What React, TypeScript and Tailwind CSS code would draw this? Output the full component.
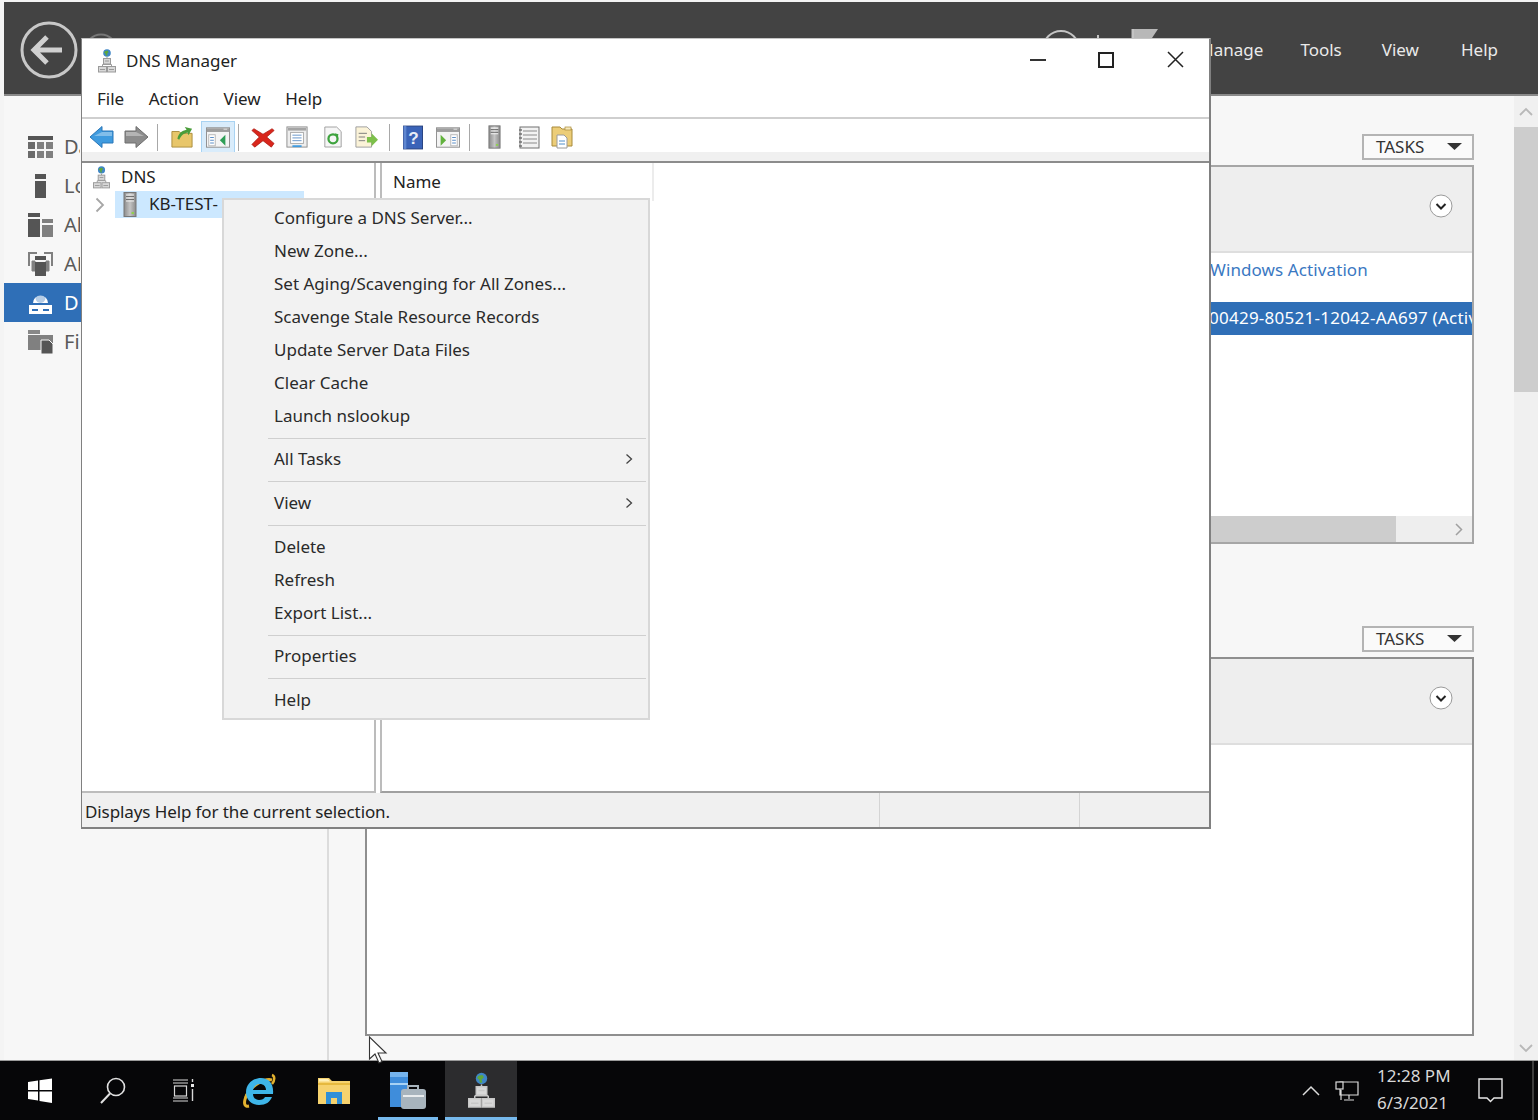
import React from "react";

function Dns({ w = 18, h = 24, c = "#9a9a9a" }: { w?: number; h?: number; c?: string }) {
  return (
    <svg width={w} height={h} viewBox="0 0 18 24" className="shrink-0">
      <circle cx="9" cy="4" r="3.800" fill="#3f86c6" />
      <path d="M7 2.200l2.600-.6 1 1.600-1.600 1.600 .6 1.800-1.600.2-.6-2.200L6 3.600z" fill="#5fa83a" />
      <path d="M9 8v2" stroke={c} strokeWidth="1" />
      <rect x="5.500" y="9.500" width="7" height="5.500" fill="#d8d8d8" stroke={c} />
      <path d="M4.500 15.500v2M13.500 15.500v2M4.500 15.500h9" stroke={c} fill="none" />
      <rect x="0.500" y="17.500" width="8" height="5.500" fill="#d8d8d8" stroke={c} />
      <rect x="9.500" y="17.500" width="8" height="5.500" fill="#d8d8d8" stroke={c} />
      <path d="M2 20.500h5M11 20.500h5M7 12h4" stroke={c} />
    </svg>
  );
}

function ServerIco({ w = 14, h = 25 }: { w?: number; h?: number }) {
  return (
    <svg width={w} height={h} viewBox="0 0 14 25" className="shrink-0">
      <defs>
        <linearGradient id="srv" x1="0" x2="1" y1="0" y2="0">
          <stop offset="0" stopColor="#8c8c8c" />
          <stop offset="0.5" stopColor="#c4c4c4" />
          <stop offset="1" stopColor="#8a8a8a" />
        </linearGradient>
      </defs>
      <rect x="1" y="0.500" width="12" height="24" fill="url(#srv)" stroke="#777" />
      <path d="M3 3h8M3 6h8M3 9h8" stroke="#f2f2f2" strokeWidth="1.200" />
      <path d="M3 4.500h8M3 7.500h8" stroke="#5f5f5f" strokeWidth="0.800" />
      <rect x="8.500" y="20" width="2.500" height="2" fill="#8fd04f" />
    </svg>
  );
}

function Arrow({ color, edge, flip }: { color: string; edge: string; flip?: boolean }) {
  return (
    <svg width="25" height="24" viewBox="0 0 25 24" className={flip ? "-scale-x-100" : ""}>
      <path d="M1 12 L13 1.500 V6 H24 V18 H13 V22.500Z" fill={color} stroke={edge} strokeWidth="1" strokeLinejoin="round" />
      <path d="M13 7 H23 V11 H5z" fill="#ffffff" fillOpacity="0.35" />
    </svg>
  );
}

function WinPane({ left }: { left: boolean }) {
  return (
    <svg width="24" height="21" viewBox="0 0 26 22">
      <rect x="0.500" y="0.500" width="25" height="21" fill="#f4f4f4" stroke="#8b8b8b" />
      <rect x="1" y="1" width="24" height="4" fill="#9d9d9d" />
      <path d="M19 2h4" stroke="#e8e8e8" strokeWidth="1" />
      {left ? (
        <>
          <rect x="3" y="8" width="7" height="12" fill="#fff" stroke="#b5b5b5" />
          <path d="M4.500 11h4M4.500 14h4M4.500 17h4" stroke="#5d8fc7" strokeWidth="1.200" />
          <path d="M21 8 L15 14 L21 20z" fill="#2f9e57" />
        </>
      ) : (
        <>
          <path d="M5 8 L11 14 L5 20z" fill="#62b23d" />
          <rect x="16" y="8" width="7" height="12" fill="#fff" stroke="#b5b5b5" />
          <path d="M17.500 11h4M17.500 14h4M17.500 17h4" stroke="#5d8fc7" strokeWidth="1.200" />
        </>
      )}
    </svg>
  );
}

function ToolSep() {
  return <div className="w-[1px] h-[27px] bg-[#a8a8a8] shrink-0" />;
}

function MenuRow({ label, arrow }: { label: string; arrow?: boolean }) {
  return (
    <div className="h-[33px] flex items-center pl-[50px] pr-[15px] justify-between">
      <span>{label}</span>
      {arrow && (
        <svg width="8" height="12" viewBox="0 0 8 12">
          <path d="M1.500 1.500 L6.500 6 L1.500 10.500" fill="none" stroke="#444" strokeWidth="1.300" />
        </svg>
      )}
    </div>
  );
}

function MenuSep() {
  return (
    <div className="h-[10.6px] flex items-center pl-[44px] pr-[2px] pt-[2px]">
      <div className="h-[1px] w-full bg-[#cfcfcf]" />
    </div>
  );
}

function CircleChevron() {
  return (
    <svg width="24" height="24" viewBox="0 0 24 24">
      <circle cx="12" cy="12" r="11" fill="#fff" stroke="#9a9a9a" />
      <path d="M7.500 10 L12 14.500 L16.500 10" fill="none" stroke="#222" strokeWidth="2" />
    </svg>
  );
}

function Tasks() {
  return (
    <div className="self-end w-[112px] h-[26px] border-2 border-[#b4b4b4] bg-[#fafafa] flex items-center justify-between pl-[12px] pr-[10px] text-[#333]">
      <span>TASKS</span>
      <svg width="15" height="7" viewBox="0 0 15 7" className="mb-[2px]">
        <path d="M0 0h15L7.500 7z" fill="#333" />
      </svg>
    </div>
  );
}

function SideIcon({ i }: { i: number }) {
  const c = "#6b6b6b";
  if (i === 0)
    return (
      <svg width="25" height="24" viewBox="0 0 25 24">
        <rect x="0" y="1" width="25" height="4" fill="#555" />
        <rect x="0" y="7" width="7" height="7" fill={c} />
        <rect x="9" y="7" width="7" height="7" fill="#808080" />
        <rect x="18" y="7" width="7" height="7" fill="#808080" />
        <rect x="0" y="16" width="7" height="7" fill={c} />
        <rect x="9" y="16" width="7" height="7" fill="#808080" />
        <rect x="18" y="16" width="7" height="7" fill="#808080" />
      </svg>
    );
  if (i === 1)
    return (
      <svg width="25" height="24" viewBox="0 0 25 24">
        <rect x="7" y="0" width="11" height="5" fill="#555" />
        <rect x="7" y="7" width="11" height="17" fill="#555" />
      </svg>
    );
  if (i === 2)
    return (
      <svg width="25" height="24" viewBox="0 0 25 24">
        <rect x="0" y="0" width="12" height="4" fill="#555" />
        <rect x="0" y="6" width="12" height="18" fill="#555" />
        <rect x="14" y="6" width="11" height="4" fill="#808080" />
        <rect x="14" y="12" width="11" height="12" fill="#808080" />
      </svg>
    );
  if (i === 3)
    return (
      <svg width="25" height="24" viewBox="0 0 25 24">
        <path d="M1 14V1h8M16 1h8v13" fill="none" stroke="#808080" strokeWidth="2" />
        <path d="M4 9h3v10H4zM18 9h3v10h-3z" fill="#808080" stroke="#808080" />
        <rect x="7" y="4" width="11" height="4" fill="#555" />
        <rect x="7" y="10" width="11" height="15" fill="#555" />
      </svg>
    );
  if (i === 4)
    return (
      <svg width="25" height="24" viewBox="0 0 25 24">
        <path d="M5 12a7.500 7.500 0 0 1 15 0z" fill="#fff" />
        <circle cx="12.500" cy="7" r="5" fill="#2f6fb7" fillOpacity="0.35" />
        <rect x="1" y="14" width="23" height="9" fill="#fff" />
        <rect x="4" y="18" width="6" height="2" fill="#2f6fb7" />
        <rect x="15" y="18" width="6" height="2" fill="#2f6fb7" />
      </svg>
    );
  return (
    <svg width="25" height="24" viewBox="0 0 25 24">
      <rect x="0" y="0" width="12" height="4" fill="#888" />
      <rect x="0" y="5" width="25" height="15" fill="#808080" />
      <path d="M13 10h8l4 4v10H13z" fill="#555" stroke="#f7f7f7" />
    </svg>
  );
}

export default function App() {
  const side = ["Dashboard", "Local Server", "All Servers", "AD DS", "DNS", "File and Storage Services"];
  return (
    <div className="relative w-[1538px] h-[1120px] overflow-hidden bg-[#f4f4f4] font-['Noto_Sans',sans-serif] text-[17px] text-[#262626] pt-[2px] pl-[4px]">
      {/* Server Manager */}
      <div className="h-[1118px] flex flex-col">
        <div className="h-[94px] bg-[#434343] border-b-2 border-[#8a8a8a] flex items-center shrink-0 text-[#eaeaea] text-[17px]">
          <svg width="58" height="58" viewBox="0 0 58 58" className="ml-[16px] mb-[-4px] shrink-0">
            <circle cx="29" cy="29" r="27" fill="none" stroke="#c8c8c8" strokeWidth="3" />
            <path d="M42 29H15M27 16L14 29l13 13" fill="none" stroke="#d0d0d0" strokeWidth="5" />
          </svg>
          <svg width="34" height="34" viewBox="0 0 34 34" className="ml-[6px] mb-[-4px] shrink-0">
            <circle cx="17" cy="17" r="15.500" fill="none" stroke="#777" strokeWidth="2" />
          </svg>
          <div className="flex-1" />
          <svg width="116" height="40" viewBox="0 0 116 40" className="mr-[40px] shrink-0">
            <circle cx="19" cy="21" r="18" fill="none" stroke="#c4c4c4" strokeWidth="2" />
            <path d="M56 7v3" stroke="#c4c4c4" strokeWidth="2" />
            <path d="M91 1v20" stroke="#c4c4c4" strokeWidth="3" />
            <path d="M92 1h24l-6 9h-18z" fill="#b8b8b8" />
          </svg>
          <div className="flex pr-[40px] items-center mb-[-4px]">
            <span>Manage</span>
            <span className="ml-[37px]">Tools</span>
            <span className="ml-[40px]">View</span>
            <span className="ml-[42px]">Help</span>
          </div>
        </div>
        <div className="flex-1 flex min-h-0 bg-[#f7f7f7]">
          <div className="w-[325px] shrink-0 border-r-2 border-[#dcdcdc] pt-[31px]">
            {side.map((s, i) => (
              <div
                key={s}
                className={
                  i === 4
                    ? "h-[39px] flex items-center pl-[24px] gap-[11px] text-[20px] bg-[#2f6fb7] text-white"
                    : "h-[39px] flex items-center pl-[24px] gap-[11px] text-[20px] text-[#5a5a5a]"
                }
              >
                <SideIcon i={i} />
                <span className="w-[16px] overflow-hidden whitespace-nowrap">{s}</span>
              </div>
            ))}
          </div>
          <div className="flex-1 min-w-0 flex flex-col pl-[36px] pr-[40px] pt-[38px]">
            <Tasks />
            <div className="mt-[5px] h-[379px] border-2 border-[#a6a6a6] bg-white flex flex-col overflow-hidden">
              <div className="h-[86px] bg-[#eeeeee] border-b-2 border-[#dedede] flex items-center justify-end pr-[19px] pb-[7px] shrink-0">
                <CircleChevron />
              </div>
              <div className="h-[49px] flex items-center pl-[843px] pb-[15px] tracking-[0.1px] text-[#3a78c2] shrink-0 whitespace-nowrap">
                Windows Activation
              </div>
              <div className="h-[33px] flex items-center pl-[842px] pb-[1px] tracking-[0.25px] bg-[#2f6fb7] text-white shrink-0 whitespace-nowrap overflow-hidden">
                00429-80521-12042-AA697 (Activated)
              </div>
              <div className="flex-1" />
              <div className="h-[26px] bg-[#eeeeee] flex items-center shrink-0">
                <div className="w-[1029px] h-full bg-[#cdcdcd]" />
                <div className="flex-1 flex justify-end pr-[9px]">
                  <svg width="8" height="13" viewBox="0 0 8 13">
                    <path d="M1 1l5.500 5.500L1 12" fill="none" stroke="#a0a0a0" strokeWidth="1.500" />
                  </svg>
                </div>
              </div>
            </div>
            <div className="mt-[82px] flex flex-col">
              <Tasks />
            </div>
            <div className="mt-[5px] h-[379px] border-2 border-[#8f8f8f] bg-white flex flex-col">
              <div className="h-[86px] bg-[#eeeeee] border-b-2 border-[#dedede] flex items-center justify-end pr-[19px] pb-[7px] shrink-0">
                <CircleChevron />
              </div>
            </div>
          </div>
          <div className="w-[24px] shrink-0 bg-[#f0f0f0] flex flex-col items-center">
            <div className="h-[31px] flex items-center justify-center">
              <svg width="14" height="9" viewBox="0 0 14 9">
                <path d="M1 8l6-6 6 6" fill="none" stroke="#b8b8b8" strokeWidth="1.800" />
              </svg>
            </div>
            <div className="w-full h-[265px] bg-[#cdcdcd]" />
            <div className="flex-1" />
            <div className="h-[24px] flex items-center justify-center">
              <svg width="14" height="9" viewBox="0 0 14 9">
                <path d="M1 1l6 6 6-6" fill="none" stroke="#b8b8b8" strokeWidth="1.800" />
              </svg>
            </div>
          </div>
        </div>
        {/* Taskbar */}
        <div className="h-[60px] shrink-0 bg-[#060608] border-t border-[#9a9a9a] -ml-[4px] pl-[4px] flex items-center text-[#d8d8d8] relative">
          <svg width="24" height="25" viewBox="0 0 24 25" className="ml-[24px] shrink-0">
            <path d="M0 4l10-1.500V12H0zM11.500 2.200L24 .500V12H11.500zM0 13.500h10v9L0 21zM11.500 13.500H24V25l-12.500-2z" fill="#fff" />
          </svg>
          <svg width="26" height="27" viewBox="0 0 26 27" className="ml-[48px] shrink-0">
            <circle cx="16" cy="10" r="8.500" fill="none" stroke="#e0e0e0" strokeWidth="1.600" />
            <path d="M10 16.500L1 26" stroke="#e0e0e0" strokeWidth="2" />
          </svg>
          <svg width="24" height="24" viewBox="0 0 24 24" className="ml-[46px] shrink-0">
            <path d="M1 1h15M1 4h15M1 22h15M1 19h15" stroke="#d8d8d8" strokeWidth="1.200" />
            <rect x="2.500" y="7" width="12" height="10" fill="none" stroke="#d8d8d8" strokeWidth="1.200" />
            <rect x="19" y="5" width="3" height="3" fill="#e8e8e8" />
            <path d="M20.500 10v12M20.500 0v3" stroke="#d8d8d8" strokeWidth="1.400" />
          </svg>
          <svg width="36" height="36" viewBox="0 0 36 36" className="ml-[45px] shrink-0">
            <path d="M31 7c-7-2-21 5-26 17" fill="none" stroke="#e2b12f" strokeWidth="3" />
            <path d="M6 21c-4 9-3 13 2 12" fill="none" stroke="#e2b12f" strokeWidth="3" />
            <path d="M31 2c3 1 3 5 0 9" fill="none" stroke="#e2b12f" strokeWidth="2.500" />
            <path d="M20 5c-8 0-15 6-15 14 0 8 6 13 13 13 7 0 11-3 13-8h-7c-1 2-3 3-6 3-3 0-6-2-6-6h20c1-10-4-16-12-16zm-8 12c1-3 3-6 7-6 3 0 6 2 6 6z" fill="#3eb5e8" />
          </svg>
          <svg width="32" height="28" viewBox="0 0 32 28" className="ml-[41px] shrink-0">
            <path d="M0 1h11l3 3h18v23H0z" fill="#f6d26e" />
            <path d="M1 2h9l2 2.500H1z" fill="#fff0b8" />
            <rect x="0" y="6" width="32" height="2" fill="#e6b93f" />
            <path d="M8 27V15h16v12h-5v-6h-6v6z" fill="#2f8fd8" />
          </svg>
          <svg width="36" height="37" viewBox="0 0 36 37" className="ml-[40px] shrink-0">
            <rect x="0" y="0" width="18" height="35" fill="#3f8ddb" />
            <rect x="0" y="0" width="18" height="5" fill="#75b4ee" />
            <rect x="0" y="11" width="18" height="2" fill="#a8d2f4" />
            <path d="M11 34V20q0-3 3-3h19q3 0 3 3v14q0 3-3 3H14q-3 0-3-3z" fill="#a8b4bd" />
            <path d="M18 17v-3h10v3" fill="none" stroke="#a8b4bd" strokeWidth="2" />
            <path d="M13 24h21" stroke="#fff" strokeWidth="1.500" />
          </svg>
          <div className="ml-[19px] w-[72px] h-[59px] bg-[#2c2c2e] flex justify-center items-center shrink-0 relative">
            <Dns w={27} h={37} c="#c8c8c8" />
            <div className="absolute left-0 right-0 bottom-0 h-[3px] bg-[#76b9ed]" />
          </div>
          <div className="absolute left-[378px] bottom-0 w-[60px] h-[3px] bg-[#76b9ed]" />
          <div className="flex-1" />
          <svg width="18" height="11" viewBox="0 0 18 11" className="shrink-0">
            <path d="M1 10l8-8 8 8" fill="none" stroke="#dcdcdc" strokeWidth="1.500" />
          </svg>
          <svg width="24" height="20" viewBox="0 0 24 20" className="ml-[15px] shrink-0">
            <path d="M5 1h18v13H5zM14 14v4M9 19h10M6 9v10" fill="none" stroke="#dcdcdc" strokeWidth="1.200" />
            <rect x="1" y="1" width="7" height="7" fill="#060608" stroke="#dcdcdc" strokeWidth="1.200" />
          </svg>
          <div className="ml-[18px] w-[76px] flex flex-col text-[17px] leading-[27px] mb-[3px]">
            <span>12:28 PM</span>
            <span>6/3/2021</span>
          </div>
          <svg width="25" height="25" viewBox="0 0 25 25" className="ml-[25px] mr-[35px] shrink-0">
            <path d="M1 1h23v19h-8l-3.500 3.500L9 20H1z" fill="none" stroke="#e8e8e8" strokeWidth="1.400" />
          </svg>
          <div className="absolute right-[4px] top-0 bottom-0 w-[2px] bg-[#3c3c3c]" />
        </div>
      </div>

      {/* Cursor */}
      <svg width="20" height="28" viewBox="0 0 20 28" className="absolute left-[368px] top-[1036px]">
        <path d="M1.500 1 V23 L7 18 L11 27 L14 25.500 L10 17 H18z" fill="#ffffff" stroke="#333" strokeWidth="1.100" />
      </svg>

      {/* DNS Manager window */}
      <div className="absolute left-[81px] top-[38px] w-[1130px] h-[791px] bg-white border-t border-t-[#c4c4c4] border-l border-r-2 border-b-2 border-[#808080] flex flex-col text-[#222]">
        <div className="h-[41px] flex items-center shrink-0 pl-[16px] pr-[25px] text-[17px]">
          <div className="mt-[3px]"><Dns /></div>
          <span className="ml-[10px] mt-[2px] flex-1">DNS Manager</span>
          <svg width="16" height="2" viewBox="0 0 16 2" className="mt-[1px]">
            <rect width="16" height="2" fill="#333" />
          </svg>
          <svg width="16" height="16" viewBox="0 0 16 16" className="ml-[52px]">
            <rect x="1" y="1" width="14" height="14" fill="none" stroke="#222" strokeWidth="2" />
          </svg>
          <svg width="17" height="17" viewBox="0 0 17 17" className="ml-[53px]">
            <path d="M1 1l15 15M16 1L1 16" stroke="#222" strokeWidth="1.500" />
          </svg>
        </div>
        <div className="h-[39px] flex items-center shrink-0 pl-[15px] pt-[1px] gap-[24.5px] border-b-2 border-[#cfcfcf]">
          <span>File</span>
          <span>Action</span>
          <span>View</span>
          <span>Help</span>
        </div>
        <div className="h-[33px] flex items-center shrink-0 pl-[7px] pt-[3px]">
          <Arrow color="#3f9bdf" edge="#2a77b8" />
          <div className="ml-[10px]"><Arrow color="#8c8c8c" edge="#6e6e6e" flip /></div>
          <div className="ml-[8px]"><ToolSep /></div>
          <svg width="22" height="24" viewBox="0 0 24 24" className="ml-[13px]">
            <path d="M1 6h8l2 2h12v15H1z" fill="#e8c66a" stroke="#a88a3a" />
            <path d="M7 14 C8 8 12 5 17 4 L15 1 L23 3 L19 10 L18 7 C14 8 11 10 9 15z" fill="#4a9d3a" />
          </svg>
          <div className="ml-[8px] w-[34px] h-[32px] bg-[#d9ecfb] border border-[#a9d3f2] flex items-center justify-center">
            <WinPane left />
          </div>
          <div className="ml-[3px]"><ToolSep /></div>
          <svg width="24" height="24" viewBox="0 0 26 24" className="ml-[12px]">
            <path d="M3 3 L13 9 L23 3 L25 5 L17 12 L25 19 L22 23 L13 16 L4 23 L1 20 L9 12 L1 5z" fill="#d9261c" stroke="#aa1a12" strokeWidth="0.800" />
          </svg>
          <svg width="22" height="24" viewBox="0 0 24 24" className="ml-[11px]">
            <rect x="1" y="1" width="22" height="22" fill="#eee" stroke="#8a8a8a" />
            <rect x="2" y="2" width="20" height="3" fill="#a4a4a4" />
            <rect x="5" y="7" width="14" height="12" fill="#fff" stroke="#a8a8a8" />
            <path d="M7 10h10M7 13h10M7 16h10" stroke="#5d8fc7" />
            <rect x="7" y="21" width="10" height="2" fill="#3f9bdf" />
          </svg>
          <svg width="20" height="24" viewBox="0 0 22 24" className="ml-[15px]">
            <path d="M2 1h13l5 5v17H2z" fill="#f6f6f6" stroke="#9a9a9a" />
            <circle cx="11" cy="14" r="5" fill="none" stroke="#3ea33e" strokeWidth="2.500" />
            <path d="M13 8l4 1-1 4z" fill="#3ea33e" />
          </svg>
          <svg width="23" height="24" viewBox="0 0 25 24" className="ml-[12px]">
            <path d="M1 1h12l5 5v17H1z" fill="#fbf3d8" stroke="#9a9a9a" />
            <path d="M4 8h9M4 12h7M4 16h7" stroke="#777" />
            <path d="M13 12h5V8l7 7-7 7v-4h-5z" fill="#7dc04a" />
          </svg>
          <div className="ml-[11px]"><ToolSep /></div>
          <svg width="20" height="25" viewBox="0 0 21 25" className="ml-[13px]">
            <rect x="0.500" y="0.500" width="20" height="24" fill="#3a63b8" stroke="#25407e" />
            <rect x="0.500" y="0.500" width="3" height="24" fill="#5f86d0" />
            <text x="5.500" y="19" fontSize="18" fontWeight="700" fill="#e8edf7" fontFamily="Liberation Sans">?</text>
          </svg>
          <div className="ml-[13px]"><WinPane left={false} /></div>
          <div className="ml-[9px]"><ToolSep /></div>
          <div className="ml-[18px]"><ServerIco w={13} h={24} /></div>
          <svg width="22" height="23" viewBox="0 0 22 23" className="ml-[17px]">
            <rect x="2" y="1" width="19" height="21" fill="#f2f2f2" stroke="#707070" />
            <path d="M1 4h3M1 8h3M1 12h3M1 16h3M1 20h3" stroke="#707070" strokeWidth="1.500" />
            <path d="M5 5h14M5 9h14M5 13h14M5 17h14" stroke="#8a8a8a" />
          </svg>
          <svg width="22" height="24" viewBox="0 0 22 24" className="ml-[11px]">
            <path d="M1 2h8l2 2h10v17H1z" fill="#eccd78" stroke="#a88a3a" />
            <rect x="14" y="2" width="6" height="3" fill="#f7e9b8" stroke="#a88a3a" strokeWidth="0.700" />
            <path d="M6 10h7l3 3v10H6z" fill="#fff" stroke="#9a9a9a" />
            <path d="M8 16h6M8 19h6" stroke="#4f8ec9" />
          </svg>
        </div>
        <div className="h-[11px] shrink-0 bg-[#f0f0f0] border-b-2 border-[#8c8c8c]" />
        <div className="flex-1 flex min-h-0 bg-[#f3f3f3]">
          <div className="w-[294px] shrink-0 bg-white border-r-2 border-[#bcbcbc] border-b-2 pt-[2px]">
            <div className="h-[24px] mb-[2px] flex items-center pl-[11px]">
              <Dns w={17} h={23} />
              <span className="ml-[11px] mb-[2px] leading-none">DNS</span>
            </div>
            <div className="h-[27px] flex items-center">
              <div className="w-[33px] flex justify-center pl-[3px]">
                <svg width="10" height="16" viewBox="0 0 10 16">
                  <path d="M1.500 1.500L8 8l-6.500 6.500" fill="none" stroke="#a6a6a6" strokeWidth="1.800" />
                </svg>
              </div>
              <div className="w-[189px] h-full bg-[#cce8ff] flex items-center pl-[8px]">
                <ServerIco />
                <span className="ml-[12px] mb-[2px] leading-none">KB-TEST-</span>
              </div>
            </div>
          </div>
          <div className="w-[4px] shrink-0 bg-white" />
          <div className="flex-1 bg-white border-l-2 border-[#bcbcbc] border-b-2 border-b-[#a0a0a0]">
            <div className="h-[38px] w-[272px] border-r-2 border-[#ececec] flex items-center pl-[11px]">
              Name
            </div>
          </div>
        </div>
        <div className="h-[34px] shrink-0 bg-[#f0f0f0] flex items-center pl-[3px]">
          <span className="w-[795px] h-full flex items-center pt-[3px] tracking-[-0.1px] border-r border-[#d4d4d4]">Displays Help for the current selection.</span>
          <span className="w-[200px] h-full border-r border-[#d4d4d4]" />
        </div>
      </div>

      {/* Context menu */}
      <div className="absolute left-[222px] top-[198px] w-[428px] h-[522px] bg-[#f2f2f2] border-2 border-[#d8d8d8] pt-[1px] text-[#2a2a2a]">
        <MenuRow label="Configure a DNS Server..." />
        <MenuRow label="New Zone..." />
        <MenuRow label="Set Aging/Scavenging for All Zones..." />
        <MenuRow label="Scavenge Stale Resource Records" />
        <MenuRow label="Update Server Data Files" />
        <MenuRow label="Clear Cache" />
        <MenuRow label="Launch nslookup" />
        <MenuSep />
        <MenuRow label="All Tasks" arrow />
        <MenuSep />
        <MenuRow label="View" arrow />
        <MenuSep />
        <MenuRow label="Delete" />
        <MenuRow label="Refresh" />
        <MenuRow label="Export List..." />
        <MenuSep />
        <MenuRow label="Properties" />
        <MenuSep />
        <MenuRow label="Help" />
      </div>
    </div>
  );
}
